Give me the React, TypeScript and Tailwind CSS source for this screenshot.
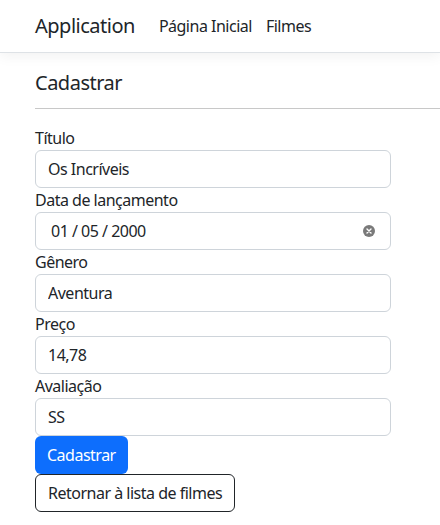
import React from 'react';

const fields = [
  { label: 'Gênero', value: 'Aventura' },
  { label: 'Preço', value: '14,78' },
  { label: 'Avaliação', value: 'SS' },
];

function Field({ label, value }: { label: string; value: string }) {
  return (
    <div className="flex flex-col">
      <label className="leading-6">{label}</label>
      <input
        readOnly
        value={value}
        className="h-[38px] w-full rounded-md border border-[#ced4da] bg-white px-3 text-base tracking-[-0.5px] text-[#212529] outline-none"
      />
    </div>
  );
}

export default function App() {
  return (
    <div className="min-h-screen bg-white text-[#212529] font-['Noto_Sans',sans-serif] text-base tracking-[-0.5px]">
      {/* barra de navegação */}
      <nav className="flex h-[53px] items-center border-b border-[#dee2e6] pl-[35px] shadow-[0_4px_12px_rgba(0,0,0,0.05)]">
        <span className="mr-6 text-xl">Application</span>
        <div className="flex gap-[14px] text-[#212529]">
          <a href="#">Página Inicial</a>
          <a href="#">Filmes</a>
        </div>
      </nav>

      <main className="pl-[35px] pt-[18px]">
        <h4 className="text-xl leading-6">Cadastrar</h4>
        <hr className="mt-[13px] mb-[17px] border-[#c8c8c8]" />

        <form className="flex w-[356px] flex-col">
          <Field label="Título" value="Os Incríveis" />

          <div className="flex flex-col">
            <label className="leading-6">Data de lançamento</label>
            <div className="relative">
              <input
                readOnly
                value="01 / 05 / 2000"
                className="h-[38px] w-full rounded-md border border-[#ced4da] bg-white pl-[15px] pr-3 text-base tracking-[-0.5px] text-[#212529] outline-none"
              />
              <span className="absolute right-[16px] top-1/2 flex h-[12px] w-[12px] -translate-y-1/2 items-center justify-center rounded-full bg-[#7a7a7a]">
                <svg width="6" height="6" viewBox="0 0 6 6">
                  <path d="M1 1 L5 5 M5 1 L1 5" stroke="white" strokeWidth="1.4" strokeLinecap="round" />
                </svg>
              </span>
            </div>
          </div>

          {fields.map((f) => (
            <Field key={f.label} label={f.label} value={f.value} />
          ))}

          <div className="flex flex-col items-start">
            <button
              type="button"
              className="h-[38px] rounded-md bg-[#0d6efd] px-3 text-white"
            >
              Cadastrar
            </button>
            <button
              type="button"
              className="h-[38px] rounded-md border border-[#212529] bg-white px-3 text-[#212529]"
            >
              Retornar à lista de filmes
            </button>
          </div>
        </form>
      </main>
    </div>
  );
}
